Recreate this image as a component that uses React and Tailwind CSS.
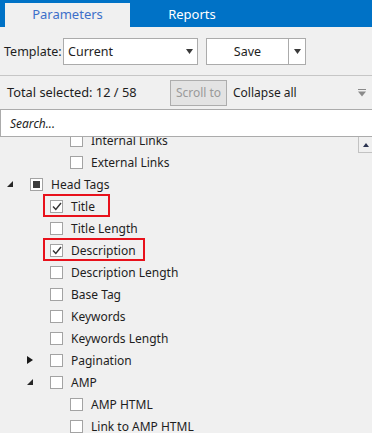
import React from 'react';

const rows = [
  { label: 'Internal Links', level: 2 },
  { label: 'External Links', level: 2 },
  { label: 'Head Tags', level: 0, expander: 'open', state: 'partial' },
  { label: 'Title', level: 1, state: 'checked', mark: 'w-[67px]' },
  { label: 'Title Length', level: 1 },
  { label: 'Description', level: 1, state: 'checked', mark: 'w-[102px]' },
  { label: 'Description Length', level: 1 },
  { label: 'Base Tag', level: 1 },
  { label: 'Keywords', level: 1 },
  { label: 'Keywords Length', level: 1 },
  { label: 'Pagination', level: 1, expander: 'closed' },
  { label: 'AMP', level: 1, expander: 'open' },
  { label: 'AMP HTML', level: 2 },
  { label: 'Link to AMP HTML', level: 2 },
];

const indent = ['pl-0', 'pl-[20px]', 'pl-[40px]'];

function DownArrow({ className = '' }) {
  return (
    <svg width="7" height="5" viewBox="0 0 7 5" className={className}>
      <polygon points="0,0 7,0 3.5,5" fill="#3a3a3a" />
    </svg>
  );
}

function Expander({ kind }) {
  if (kind === 'open') {
    return (
      <svg width="6" height="6" viewBox="0 0 6 6" className="ml-[7px]">
        <polygon points="6,0 6,6 0,6" fill="#262626" />
      </svg>
    );
  }
  if (kind === 'closed') {
    return (
      <svg width="6" height="8" viewBox="0 0 6 8" className="ml-[7px]">
        <polygon points="0,0 6,4 0,8" fill="#1a1a1a" />
      </svg>
    );
  }
  return null;
}

function Check({ state }) {
  return (
    <span className="w-[13px] h-[13px] border border-[#a3a3a3] bg-white flex items-center justify-center shrink-0">
      {state === 'checked' && (
        <svg width="10" height="9" viewBox="0 0 10 9">
          <polyline points="1,4.5 3.8,7.5 9,1" fill="none" stroke="#333" strokeWidth="1.4" />
        </svg>
      )}
      {state === 'partial' && <span className="w-[7px] h-[7px] bg-[#3c3c3c]" />}
    </span>
  );
}

function TreeRow({ row }) {
  return (
    <div className={`relative h-[22px] flex items-center ${indent[row.level]}`}>
      <div className="w-[30px] flex items-center">
        <Expander kind={row.expander} />
      </div>
      <Check state={row.state} />
      <span className="ml-[8px] mt-[1px] whitespace-nowrap">{row.label}</span>
      {row.mark && (
        <div className={`absolute left-[43px] top-[-1px] h-[23px] border-2 border-[#e8111b] ${row.mark}`} />
      )}
    </div>
  );
}

export default function App() {
  return (
    <div className="w-[372px] h-[433px] bg-[#f0f0f0] overflow-hidden flex flex-col text-[12px] text-[#1e1e1e] font-['Noto_Sans',sans-serif]">
      <div className="h-[27px] shrink-0 bg-[#0072c6] flex items-end pl-[5px] text-[13px]">
        <div className="w-[125px] h-[24px] bg-[#f0f0f0] flex items-center justify-center text-[#3d6fc9]">
          Parameters
        </div>
        <div className="w-[124px] h-[24px] flex items-center justify-center text-white">Reports</div>
      </div>

      <div className="h-[49px] shrink-0 flex items-center border-b border-[#c6c6c6] pl-[4px]">
        <span className="w-[59px] mt-[3px] text-[12.5px]">Template:</span>
        <div className="w-[135px] h-[27px] bg-white border border-[#ababab] flex items-center justify-between pl-[4px] pr-[4px]">
          <span className="mt-[3px] text-[12.5px]">Current</span>
          <DownArrow />
        </div>
        <div className="ml-[8px] w-[100px] h-[27px] bg-white border border-[#ababab] flex">
          <div className="flex-1 flex items-center justify-center border-r border-[#ababab]">
            <span className="mt-[3px] text-[12.5px]">Save</span>
          </div>
          <div className="w-[16px] flex items-center justify-center">
            <DownArrow />
          </div>
        </div>
      </div>

      <div className="h-[33px] shrink-0 flex items-center pl-[7px] pr-[6px]">
        <span className="w-[163px] text-[12.8px] mt-[1px]">Total selected: 12 / 58</span>
        <div className="w-[57px] h-[26px] border border-[#adadad] bg-[#e3e3e3] text-[#9a9a9a] flex items-center justify-center">
          <span className="mt-[1px]">Scroll to</span>
        </div>
        <span className="ml-[6px] mt-[1px]">Collapse all</span>
        <svg width="8" height="8" viewBox="0 0 8 8" className="ml-auto">
          <rect x="0" y="0" width="8" height="1" fill="#8a8a8a" />
          <polygon points="0,2.5 8,2.5 4,7.5" fill="#8a8a8a" />
        </svg>
      </div>

      <div className="h-[28px] shrink-0 bg-white border border-[#ababab] border-r-0 flex items-center pl-[9px] italic">
        <span className="mt-[1px]">Search...</span>
      </div>

      <div className="flex-1 flex overflow-hidden">
        <div className="flex-1 overflow-hidden">
          <div className="-mt-[8px]">
            {rows.map((row) => (
              <TreeRow key={row.label} row={row} />
            ))}
          </div>
        </div>
        <div className="w-[14px] shrink-0">
          <div className="h-[16px] border-l border-b border-[#c2c2c2] flex items-center justify-center">
            <svg width="6" height="4" viewBox="0 0 6 4">
              <polygon points="0,4 6,4 3,0" fill="#2b3350" />
            </svg>
          </div>
        </div>
      </div>
    </div>
  );
}
